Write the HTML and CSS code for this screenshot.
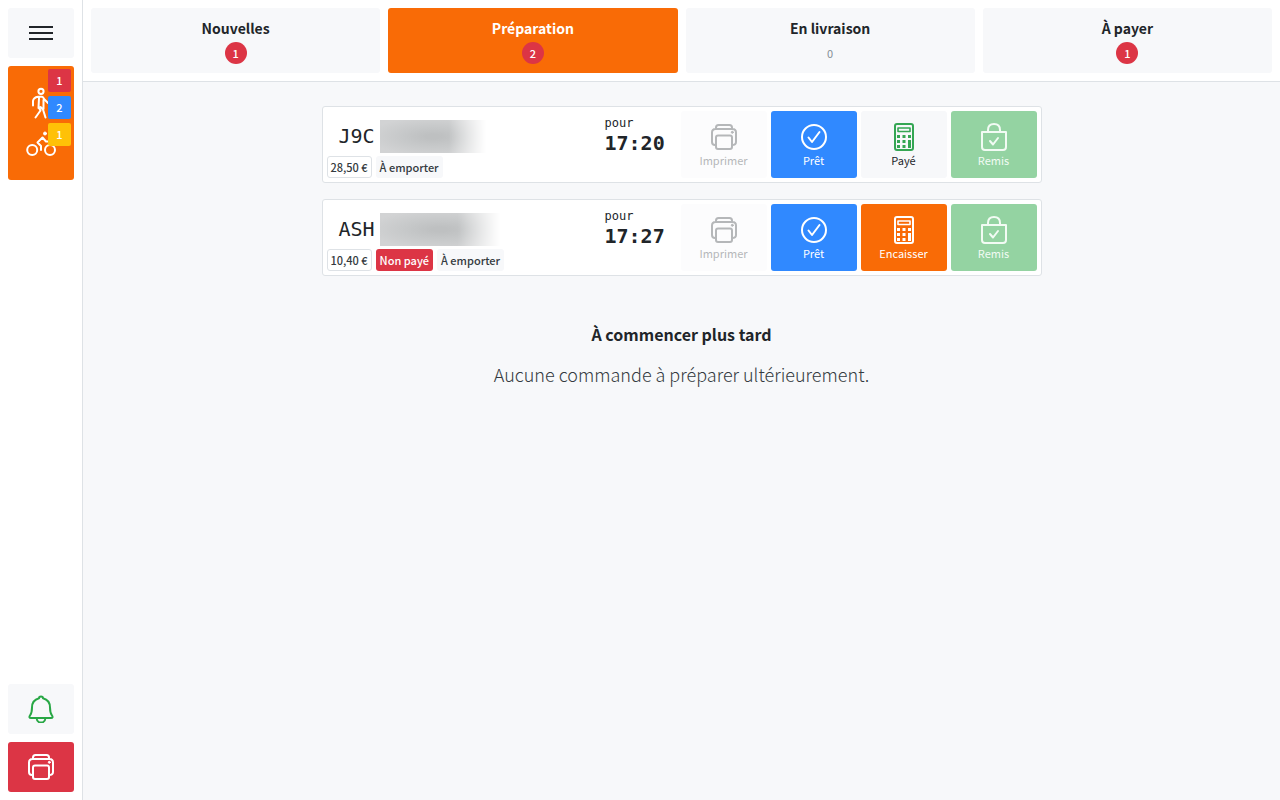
FILE: index.html
```html
<!DOCTYPE html>
<html lang="fr">
<head>
<meta charset="utf-8">
<meta name="viewport" content="width=device-width, initial-scale=1">
<title>Commandes</title>
<link rel="stylesheet" href="styles.css">
</head>
<body>
<svg class="sprite" aria-hidden="true">
  <symbol id="printer" viewBox="0 0 28 28">
    <path d="M6 22H5Q2 22 2 19V9.500Q2 6 5.500 6H22.500Q26 6 26 9.500V19Q26 22 22 22M6 6V4.500Q6 2 8.500 2H19.500Q22 2 22 4.500V6"/>
    <rect x="6" y="12.500" width="16" height="13.500" rx="2"/>
    <circle cx="22.300" cy="9.300" r="1" fill="currentColor" stroke-width="1"/>
  </symbol>
  <symbol id="check" viewBox="0 0 28 28">
    <circle cx="14" cy="14" r="12"/>
    <path d="M8.500 14.500L12 19L19.500 9"/>
  </symbol>
  <symbol id="calculator" viewBox="0 0 28 28">
    <rect x="5" y="1" width="18" height="26" rx="2"/>
    <rect x="8" y="5" width="12" height="3.500" stroke-width="1.600"/>
    <path stroke-width="3" stroke-linecap="butt" d="M7 13.500h3M12.500 13.500h3M18 13.500h3M7 18.500h3M12.500 18.500h3M7 23.500h3M12.500 23.500h3M19.500 17v8"/>
  </symbol>
  <symbol id="bag" viewBox="0 0 28 28">
    <path d="M2 9H26V24Q26 27 23 27H5Q2 27 2 24ZM8 9V7Q8 1 14 1T20 7V9M10 18l3 3.500l5-6.500"/>
  </symbol>
</svg>
<div class="app">
  <aside class="sidebar">
    <button class="side-btn" type="button" aria-label="Menu">
      <svg class="icon" viewBox="0 0 28 28"><path stroke-linecap="butt" d="M2 8H26M2 14H26M2 20H26"/></svg>
    </button>
    <button class="side-btn modes" type="button" aria-label="Commandes à emporter et en livraison">
      <svg class="mode-icon" viewBox="0 0 32 32">
        <circle cx="16" cy="4.300" r="2.600"/>
        <path d="M8 18.500V14Q8.500 10.500 13 9.800H17Q18.500 10 19 12L23 16M14 11L13.500 21M18.500 13V22M14 21L15.500 23.500L10.500 30.500M15.500 20L18 22.500L20.500 30.500"/>
      </svg>
      <svg class="mode-icon" viewBox="0 0 32 32">
        <circle cx="7.200" cy="19" r="5"/><circle cx="25" cy="19" r="5"/>
        <circle cx="20" cy="2.500" r="1.500" fill="currentColor" stroke-width="1"/>
        <path d="M16 19V15L12.500 11.500L17.500 6.500L21 10.500H25"/>
      </svg>
      <span class="mode-badges"><span class="mode-badge red">1</span><span class="mode-badge blue">2</span><span class="mode-badge yellow">1</span></span>
    </button>
    <button class="side-btn bell" type="button" aria-label="Notifications">
      <svg class="icon" viewBox="0 0 28 28"><path d="M14 1.500Q16 1.500 16 3.200C21 4.500 23 8 23 12.500C23 17 23.500 18.500 25 20.500Q26.500 23 24 23H4Q1.500 23 3 20.500C4.500 18.500 5 17 5 12.500C5 8 7 4.500 12 3.200Q12 1.500 14 1.500ZM9.500 23Q10 27.500 14 27.500T18.500 23"/></svg>
    </button>
    <button class="side-btn red" type="button" aria-label="Imprimante"><svg class="icon"><use href="#printer"/></svg></button>
  </aside>
  <div class="content">
    <nav class="tabs">
      <button class="tab" type="button">Nouvelles<span class="count red">1</span></button>
      <button class="tab active" type="button">Préparation<span class="count red">2</span></button>
      <button class="tab" type="button">En livraison<span class="count">0</span></button>
      <button class="tab" type="button">À payer<span class="count red">1</span></button>
    </nav>
    <main class="orders">
      <article class="order">
        <div class="info">
          <div class="customer"><span class="code">J9C</span><span class="masked"></span></div>
          <div class="tags"><span class="tag price">28,50 €</span><span class="tag">À emporter</span></div>
        </div>
        <div class="due"><span>pour</span><time>17:20</time></div>
        <div class="actions">
          <button class="action faded" type="button"><svg class="icon"><use href="#printer"/></svg>Imprimer</button>
          <button class="action blue" type="button"><svg class="icon"><use href="#check"/></svg>Prêt</button>
          <button class="action paid" type="button"><svg class="icon"><use href="#calculator"/></svg>Payé</button>
          <button class="action green" type="button"><svg class="icon"><use href="#bag"/></svg>Remis</button>
        </div>
      </article>
      <article class="order">
        <div class="info">
          <div class="customer"><span class="code">ASH</span><span class="masked wide"></span></div>
          <div class="tags"><span class="tag price">10,40 €</span><span class="tag red">Non payé</span><span class="tag">À emporter</span></div>
        </div>
        <div class="due"><span>pour</span><time>17:27</time></div>
        <div class="actions">
          <button class="action faded" type="button"><svg class="icon"><use href="#printer"/></svg>Imprimer</button>
          <button class="action blue" type="button"><svg class="icon"><use href="#check"/></svg>Prêt</button>
          <button class="action orange" type="button"><svg class="icon"><use href="#calculator"/></svg>Encaisser</button>
          <button class="action green" type="button"><svg class="icon"><use href="#bag"/></svg>Remis</button>
        </div>
      </article>
      <section class="later">
        <h2>À commencer plus tard</h2>
        <p>Aucune commande à préparer ultérieurement.</p>
      </section>
    </main>
  </div>
</div>
</body>
</html>
```

FILE: styles.css
```css
* { box-sizing: border-box; }
body {
  margin: 0;
  background: #f7f8fa;
  color: #212529;
  font-family: "Noto Sans CJK SC", "Noto Sans", sans-serif;
}
button {
  border: 0;
  border-radius: 3px;
  padding: 0;
  background: #f7f8fa;
  color: inherit;
  font-family: inherit;
  cursor: pointer;
}
svg {
  fill: none;
  stroke: currentColor;
  stroke-width: 2;
  stroke-linecap: round;
  stroke-linejoin: round;
}
.sprite { position: absolute; width: 0; height: 0; }
.icon { display: block; width: 28px; height: 28px; }
.app { display: flex; min-height: 100vh; }

.sidebar {
  display: flex;
  flex-direction: column;
  gap: 8px;
  flex: none;
  padding: 8px;
  border-right: 1px solid #dee2e6;
  background: #fff;
}
.side-btn {
  display: flex;
  align-items: center;
  justify-content: center;
  width: 66px;
  height: 50px;
}
.modes {
  position: relative;
  flex-direction: column;
  gap: 12px;
  height: 114px;
  padding-top: 4px;
  background: #f96b06;
  color: #fff;
}
.mode-icon { width: 32px; height: 32px; overflow: visible; }
.mode-badges {
  position: absolute;
  top: 3px;
  right: 3px;
  display: grid;
  gap: 4px;
}
.mode-badge {
  width: 23px;
  border-radius: 2px;
  color: #fff;
  font-size: 11px;
  font-weight: 500;
  line-height: 23px;
}
.bell { margin-top: auto; color: #28a745; }
.red { background: #dc3545; color: #fff; }
.blue { background: #3089ff; color: #fff; }
.yellow { background: #ffc107; }
.orange { background: #f96b06; color: #fff; }
.green { background: #94d3a2; color: #f2fbf4; }

.content { flex: 1; min-width: 0; }
.tabs {
  display: grid;
  grid-template-columns: repeat(4, 1fr);
  gap: 8px;
  padding: 8px;
  border-bottom: 1px solid #dee2e6;
  background: #fff;
}
.tab {
  display: flex;
  flex-direction: column;
  align-items: center;
  gap: 2px;
  padding: 8px 8px 9px;
  font-size: 14px;
  font-weight: 700;
  line-height: 24px;
}
.tab.active { background: #f96b06; color: #fff; }
.count {
  width: 22px;
  border-radius: 50%;
  font-size: 11px;
  font-weight: 500;
  line-height: 22px;
}
.count:not(.red) { color: #868e96; font-weight: 400; }

.orders {
  display: flex;
  flex-direction: column;
  gap: 16px;
  max-width: 720px;
  margin: 0 auto;
  padding-top: 24px;
}
.order {
  display: flex;
  padding: 4px;
  border: 1px solid #dee2e6;
  border-radius: 3px;
  background: #fff;
}
.info {
  display: flex;
  flex: 1;
  flex-direction: column;
  justify-content: space-between;
}
.customer {
  display: flex;
  align-items: center;
  gap: 5px;
  padding: 8px 0 0 12px;
}
.code { width: 36px; font: 20px/34px "DejaVu Sans Mono", monospace; }
.masked {
  width: 106px;
  height: 33px;
  background: radial-gradient(ellipse at 50% 50%, #bec0c1 10%, #c6c8c9 40%, #cfd0d100 85%), #d2d3d4;
  mask-image: linear-gradient(90deg, #000 65%, transparent);
}
.masked.wide { width: 120px; }
.tags { display: flex; gap: 4px; }
.tag {
  padding: 0 4px;
  border-radius: 3px;
  font-size: 11px;
  font-weight: 500;
  line-height: 22px;
}
.tag:not(.red) { background: #f7f8fa; color: #343a40; }
.tag.price {
  border: 1px solid #dee2e6;
  padding: 0 3px;
  background: #fff;
  line-height: 20px;
}
.due {
  display: flex;
  flex-direction: column;
  width: 76px;
  padding-top: 4px;
  font: 12px/16px "DejaVu Sans Mono", monospace;
}
.due time { font-size: 20px; font-weight: 700; line-height: 24px; }
.actions { display: flex; gap: 4px; }
.action {
  display: flex;
  flex-direction: column;
  align-items: center;
  width: 86px;
  padding: 12px 0 9px;
  font-size: 11px;
  line-height: 18px;
}
.faded { background: #fcfcfd; color: #b5b7b9; }
.paid .icon { color: #34a653; }

.later { padding: 30px 8px; text-align: center; }
.later h2 { margin: 0; font-size: 16px; font-weight: 700; line-height: 24px; }
.later p { margin: 14px 0 0; color: #343a40; font-size: 18px; font-weight: 300; line-height: 28px; }
```
